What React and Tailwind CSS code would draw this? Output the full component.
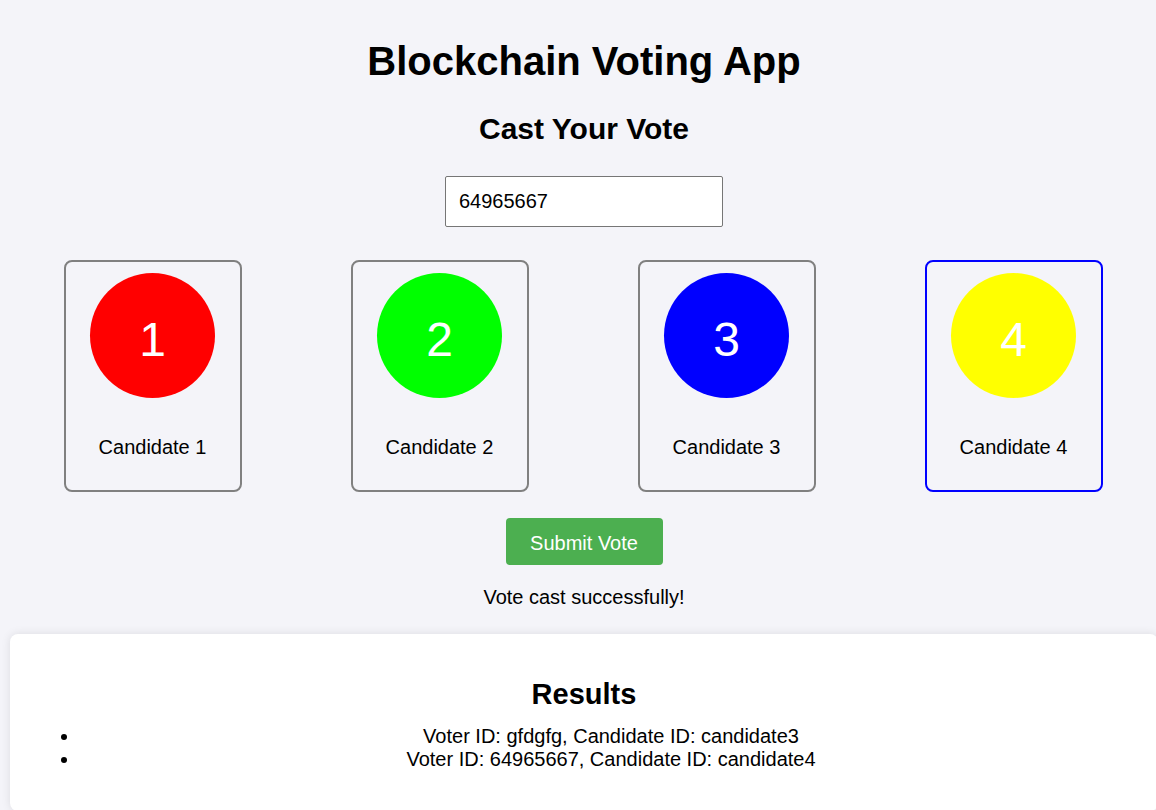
import React from "react";

const candidates = [
  { id: 1, color: "bg-[#ff0000]", selected: false },
  { id: 2, color: "bg-[#00ff00]", selected: false },
  { id: 3, color: "bg-[#0000ff]", selected: false },
  { id: 4, color: "bg-[#ffff00]", selected: true },
];

export default function App() {
  return (
    <div
      className="w-[1156px] h-[810px] overflow-hidden bg-[#f4f4f9] text-black"
      style={{ fontFamily: '"Liberation Sans", Arial, sans-serif' }}
    >
      <div className="w-[1168px] text-center text-[20px] leading-[23px]">
        <h1 className="pt-[38px] text-[40px] leading-[46px] font-bold">Blockchain Voting App</h1>
        <h2 className="mt-[28px] text-[30px] leading-[33px] font-bold">Cast Your Vote</h2>
        <div className="mt-[31px] flex justify-center">
          <input
            type="text"
            defaultValue="64965667"
            className="w-[278px] h-[51px] px-[13px] bg-white border border-[#767676] rounded-[2px] text-[20px] outline-none"
            style={{ fontFamily: '"Liberation Sans", Arial, sans-serif' }}
          />
        </div>
        <div className="mt-[33px] pl-[9px] pr-[11px] flex justify-around">
          {candidates.map((c) => (
            <div
              key={c.id}
              className={`w-[178px] h-[232px] rounded-[8px] border-2 flex flex-col items-center pt-[11px] ${
                c.selected ? "border-[#0000ff]" : "border-[#808080]"
              }`}
            >
              <div
                className={`w-[125px] h-[125px] rounded-full ${c.color} flex items-center justify-center pt-[8px] text-white text-[48px] leading-none`}
              >
                {c.id}
              </div>
              <div className="mt-[38px]">Candidate {c.id}</div>
            </div>
          ))}
        </div>
        <div className="mt-[26px] flex justify-center">
          <button className="w-[157px] h-[47px] pt-[4px] bg-[#4caf50] text-white rounded-[4px] text-[20px]">
            Submit Vote
          </button>
        </div>
        <p className="mt-[21px]">Vote cast successfully!</p>
        <div className="mt-[25px] ml-[10px] w-[1148px] bg-white rounded-[8px] shadow-[0_0_10px_rgba(0,0,0,0.1)] px-[20px] pt-[20px] pb-[40px]">
          <h2 className="mt-[24px] mb-[24px] text-[29px] leading-[33px] font-bold">Results</h2>
          <ul className="list-disc pl-[50px] -mr-[4px] -mt-[10px]">
            <li>Voter ID: gfdgfg, Candidate ID: candidate3</li>
            <li>Voter ID: 64965667, Candidate ID: candidate4</li>
          </ul>
        </div>
      </div>
    </div>
  );
}
